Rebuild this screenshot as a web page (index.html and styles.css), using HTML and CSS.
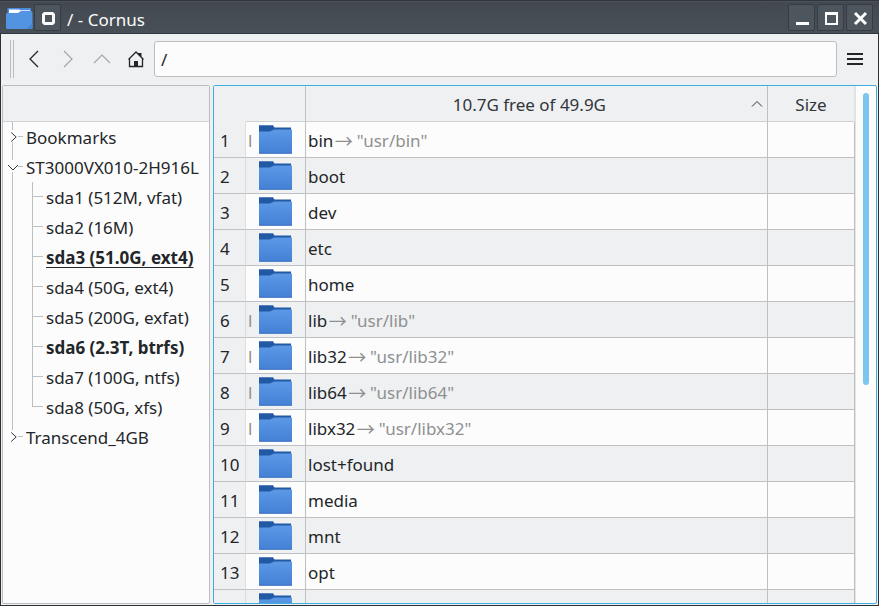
FILE: index.html
```html
<!DOCTYPE html>
<html lang="en">
<head>
<meta charset="utf-8">
<title>/ - Cornus</title>
<link rel="stylesheet" href="styles.css">
</head>
<body>
<svg width="0" height="0" class="defs">
  <defs>
    <linearGradient id="fg" x1="0" y1="0" x2="0" y2="1"><stop offset="0" stop-color="#5b99e6"/><stop offset="1" stop-color="#4480d5"/></linearGradient>
    <symbol id="folder" viewBox="0 0 34 30">
      <path d="M0 0.300H14L15.500 2.500H32V10H0Z" fill="#2259a5"/>
      <path d="M0 6.500H11L15 4.500H33V28.500H0Z" fill="url(#fg)"/>
      <path d="M0 28.200H33" stroke="#3a70bf"/>
    </symbol>
    <symbol id="right" viewBox="0 0 12 12"><path d="M4.200 1.500L9.200 6L4.200 10.500" fill="none" stroke="#31363b"/></symbol>
    <symbol id="down" viewBox="0 0 12 12"><path d="M1 4L6 9L11 4" fill="none" stroke="#31363b"/></symbol>
  </defs>
</svg>
<div class="window">
  <header class="titlebar">
    <svg class="appicon" viewBox="0 0 28 22"><path d="M1.500 1H25V8H1.500Z" fill="#4a8bdb"/><path d="M3 2.500H13L14.500 3.200H24V6H3Z" fill="#fff"/><path d="M0 7Q0 6 1.500 6H12L15 4H25Q26.500 4 26.500 5.500V20.500Q26.500 22 25 22H1.500Q0 22 0 20.500Z" fill="#5294e2"/><path d="M26.500 16V20.500Q26.500 22 25 22H20.500Z" fill="#4684d2"/></svg>
    <span class="wbtn pin"><svg viewBox="0 0 25 25"><path d="M9 7H18L20 9V18L18 20H9L7 18V9ZM10 10V17H17V10Z" fill="#fcfcfc" fill-rule="evenodd"/></svg></span>
    <span class="title">/ - Cornus</span>
    <span class="wbtn"><svg viewBox="0 0 25 25"><path d="M7 18.500H20" stroke="#fcfcfc" stroke-width="3"/></svg></span>
    <span class="wbtn"><svg viewBox="0 0 25 25"><path d="M7 7H20V20H7ZM9 10V18H18V10Z" fill="#fcfcfc" fill-rule="evenodd"/></svg></span>
    <span class="wbtn"><svg viewBox="0 0 25 25"><path d="M8 8L19 19M19 8L8 19" stroke="#fcfcfc" stroke-width="3"/></svg></span>
  </header>
  <nav class="toolbar">
    <span class="grip"></span>
    <svg class="tool" viewBox="0 0 24 24"><path d="M16 4L8 12L16 20" stroke="#232629" stroke-width="1.300"/></svg>
    <svg class="tool" viewBox="0 0 24 24"><path d="M8 4L16 12L8 20" stroke="#a3a5a7" stroke-width="1.200"/></svg>
    <svg class="tool" viewBox="0 0 24 24"><path d="M4 16L12 8L20 16" stroke="#a3a5a7" stroke-width="1.200"/></svg>
    <svg class="tool" viewBox="0 0 24 24"><path d="M4.500 12.500L12 5L19.500 12.500M5.500 11V19.500H18.500V11" stroke="#232629" stroke-width="1.300"/><path d="M10 14H14V20H10ZM14 6H17.500V10L14 7Z" fill="#232629"/></svg>
    <div class="path">/</div>
    <svg class="menu" viewBox="0 0 16 12"><path d="M0 1H16M0 6H16M0 11H16" stroke="#232629" stroke-width="2"/></svg>
  </nav>
  <main class="content">
    <aside class="side">
      <div class="sidehead"></div>
      <ul class="tree">
        <li class="root first"><svg><use href="#right"/></svg><span>Bookmarks</span></li>
        <li class="root"><svg><use href="#down"/></svg><span>ST3000VX010-2H916L</span></li>
        <li class="leaf"><span>sda1 (512M, vfat)</span></li>
        <li class="leaf"><span>sda2 (16M)</span></li>
        <li class="leaf"><span class="bold current">sda3 (51.0G, ext4)</span></li>
        <li class="leaf"><span>sda4 (50G, ext4)</span></li>
        <li class="leaf"><span>sda5 (200G, exfat)</span></li>
        <li class="leaf"><span class="bold">sda6 (2.3T, btrfs)</span></li>
        <li class="leaf"><span>sda7 (100G, ntfs)</span></li>
        <li class="leaf last"><span>sda8 (50G, xfs)</span></li>
        <li class="root end"><svg><use href="#right"/></svg><span>Transcend_4GB</span></li>
      </ul>
    </aside>
    <section class="files">
      <div class="table">
        <div class="row head"><span class="num"></span><span class="ico"></span><span class="name">10.7G free of 49.9G<svg viewBox="0 0 12 12"><path d="M1 8.500L6 3.500L11 8.500" fill="none" stroke="#31363b"/></svg></span><span class="size">Size</span></div>
        <div class="row"><span class="num">1</span><span class="ico"><i>l</i><svg><use href="#folder"/></svg></span><span class="name">bin<em><b>→</b> "usr/bin"</em></span><span class="size"></span></div>
        <div class="row"><span class="num">2</span><span class="ico"><svg><use href="#folder"/></svg></span><span class="name">boot</span><span class="size"></span></div>
        <div class="row"><span class="num">3</span><span class="ico"><svg><use href="#folder"/></svg></span><span class="name">dev</span><span class="size"></span></div>
        <div class="row"><span class="num">4</span><span class="ico"><svg><use href="#folder"/></svg></span><span class="name">etc</span><span class="size"></span></div>
        <div class="row"><span class="num">5</span><span class="ico"><svg><use href="#folder"/></svg></span><span class="name">home</span><span class="size"></span></div>
        <div class="row"><span class="num">6</span><span class="ico"><i>l</i><svg><use href="#folder"/></svg></span><span class="name">lib<em><b>→</b> "usr/lib"</em></span><span class="size"></span></div>
        <div class="row"><span class="num">7</span><span class="ico"><i>l</i><svg><use href="#folder"/></svg></span><span class="name">lib32<em><b>→</b> "usr/lib32"</em></span><span class="size"></span></div>
        <div class="row"><span class="num">8</span><span class="ico"><i>l</i><svg><use href="#folder"/></svg></span><span class="name">lib64<em><b>→</b> "usr/lib64"</em></span><span class="size"></span></div>
        <div class="row"><span class="num">9</span><span class="ico"><i>l</i><svg><use href="#folder"/></svg></span><span class="name">libx32<em><b>→</b> "usr/libx32"</em></span><span class="size"></span></div>
        <div class="row"><span class="num">10</span><span class="ico"><svg><use href="#folder"/></svg></span><span class="name">lost+found</span><span class="size"></span></div>
        <div class="row"><span class="num">11</span><span class="ico"><svg><use href="#folder"/></svg></span><span class="name">media</span><span class="size"></span></div>
        <div class="row"><span class="num">12</span><span class="ico"><svg><use href="#folder"/></svg></span><span class="name">mnt</span><span class="size"></span></div>
        <div class="row"><span class="num">13</span><span class="ico"><svg><use href="#folder"/></svg></span><span class="name">opt</span><span class="size"></span></div>
        <div class="row"><span class="num"></span><span class="ico"><svg><use href="#folder"/></svg></span><span class="name"></span><span class="size"></span></div>
      </div>
      <div class="scroll"><div class="thumb"></div></div>
    </section>
  </main>
</div>
</body>
</html>
```
FILE: styles.css
```css
* { box-sizing: border-box; }
body { margin: 0; font: 17px/24px "Noto Sans", sans-serif; color: #232629; overflow: hidden; }
.defs { position: absolute; }
.window { width: 879px; height: 606px; display: flex; flex-direction: column; background: #eff0f1; border: 1px solid #2b3036; border-top: 0; }
.titlebar { height: 34px; flex: none; margin: 0 -1px; padding: 1px 6px 0 6px; display: flex; align-items: center; background: linear-gradient(#30363b 0, #30363b 1px, #545a61 1px, #434950 2px, #485057 33px, #30363b 33px); color: #fcfcfc; }
.appicon { width: 28px; height: 22px; margin-top: 1px; }
.wbtn { width: 27px; height: 27px; border: 1px solid #353c42; border-radius: 2px; background: #4d565d; margin-left: 2px; }
.wbtn.pin { margin-left: 0; }
.wbtn svg { display: block; width: 25px; height: 25px; }
.title { flex: 1; padding: 5px 0 0 6px; }
.toolbar { height: 51px; flex: none; display: flex; align-items: center; padding: 0 15px 1px 9px; }
.grip { width: 4px; height: 38px; border: solid #bbbdbf; border-width: 0 1px; margin-right: 8px; }
.tool { width: 24px; height: 24px; fill: none; margin-right: 10px; }
.tool:nth-of-type(4) { margin-right: 6px; }
.path { flex: 1; height: 36px; border: 1px solid #bbbdbf; border-radius: 3px; background: #fcfcfc; padding: 6px 6px 4px; }
.menu { width: 16px; height: 12px; margin-left: 10px; }
.content { flex: 1; min-height: 0; display: flex; gap: 3px; padding: 0 1px 1px; }
.side { width: 208px; border: 1px solid #bbbdbf; border-radius: 2px; background: #fcfcfc; }
.sidehead { height: 36px; background: #eff0f1; border-bottom: 1px solid #d0d1d3; }
.tree { list-style: none; margin: 0; padding: 0; }
.tree li { height: 30px; line-height: 32px; position: relative; white-space: nowrap; padding-left: 23px; }
.tree li.leaf { padding-left: 43px; background: linear-gradient(#bdbfc0, #bdbfc0) 9px 0 / 1px 30px no-repeat, linear-gradient(#bdbfc0, #bdbfc0) 29px 0 / 1px 30px no-repeat, linear-gradient(#bdbfc0, #bdbfc0) 30px 14px / 10px 1px no-repeat; }
.tree li.last { background-size: 1px 30px, 1px 15px, 10px 1px; }
.root { background: linear-gradient(#bdbfc0, #bdbfc0) 9px 0 / 1px 8px no-repeat, linear-gradient(#bdbfc0, #bdbfc0) 9px 20px / 1px 10px no-repeat, linear-gradient(#bdbfc0, #bdbfc0) 15px 14px / 5px 1px no-repeat; }
.root.end { background-size: 1px 8px, 0 0, 5px 1px; }
.root svg { position: absolute; left: 4px; top: 9px; width: 12px; height: 12px; }
.bold { font-weight: 700; }
.current { text-decoration: underline 1px; text-underline-offset: 3px; text-decoration-skip-ink: none; }
.files { flex: 1; display: flex; border: 1px solid #3daee0; border-radius: 2px; background: #fcfcfc; overflow: hidden; }
.table { flex: 1; min-width: 0; overflow: hidden; }
.row { display: grid; grid-template-columns: 32px 60px 462px 87px; grid-template-rows: 36px; height: 36px; line-height: 34px; }
.row:nth-child(odd) { background: #eff0f1; }
.row > span { border-right: 1px solid #bfc0c2; border-bottom: 1px solid #bfc0c2; white-space: nowrap; min-width: 0; height: 36px; padding-top: 2px; }
.row .num { background: #eff0f1; padding-left: 6px; border-right-color: #dcdddf; }
.row .ico { display: flex; padding-left: 2px; }
.ico i { font-style: normal; color: #8e9092; width: 11px; }
.ico svg { flex: none; width: 34px; height: 30px; margin: 1px 12px 0 auto; }
.row .name { padding-left: 2px; }
.name em { font-style: normal; color: #8e9092; }
.name b { display: inline-block; width: 19px; text-align: center; font: 18px/20px "Noto Sans CJK JP", sans-serif; position: relative; left: 1px; top: 1px; }
.head { color: #31363b; }
.row.head { background: #eff0f1; }
.row.head > span { border-bottom-color: #d0d1d3; }
.row.head .num { border-color: transparent; }
.row.head .name { display: flex; justify-content: flex-end; align-items: flex-start; padding-right: 4px; }
.head .name svg { width: 12px; height: 12px; margin: 10px 0 0 145px; }
.row.head .size { text-align: center; border-right-color: #e2e3e4; }
.scroll { width: 21px; padding: 7px 0 0 7px; border-left: 1px solid #e2e3e4; }
.thumb { width: 6px; height: 292px; border-radius: 3px; background: #7cc5ec; }
```
